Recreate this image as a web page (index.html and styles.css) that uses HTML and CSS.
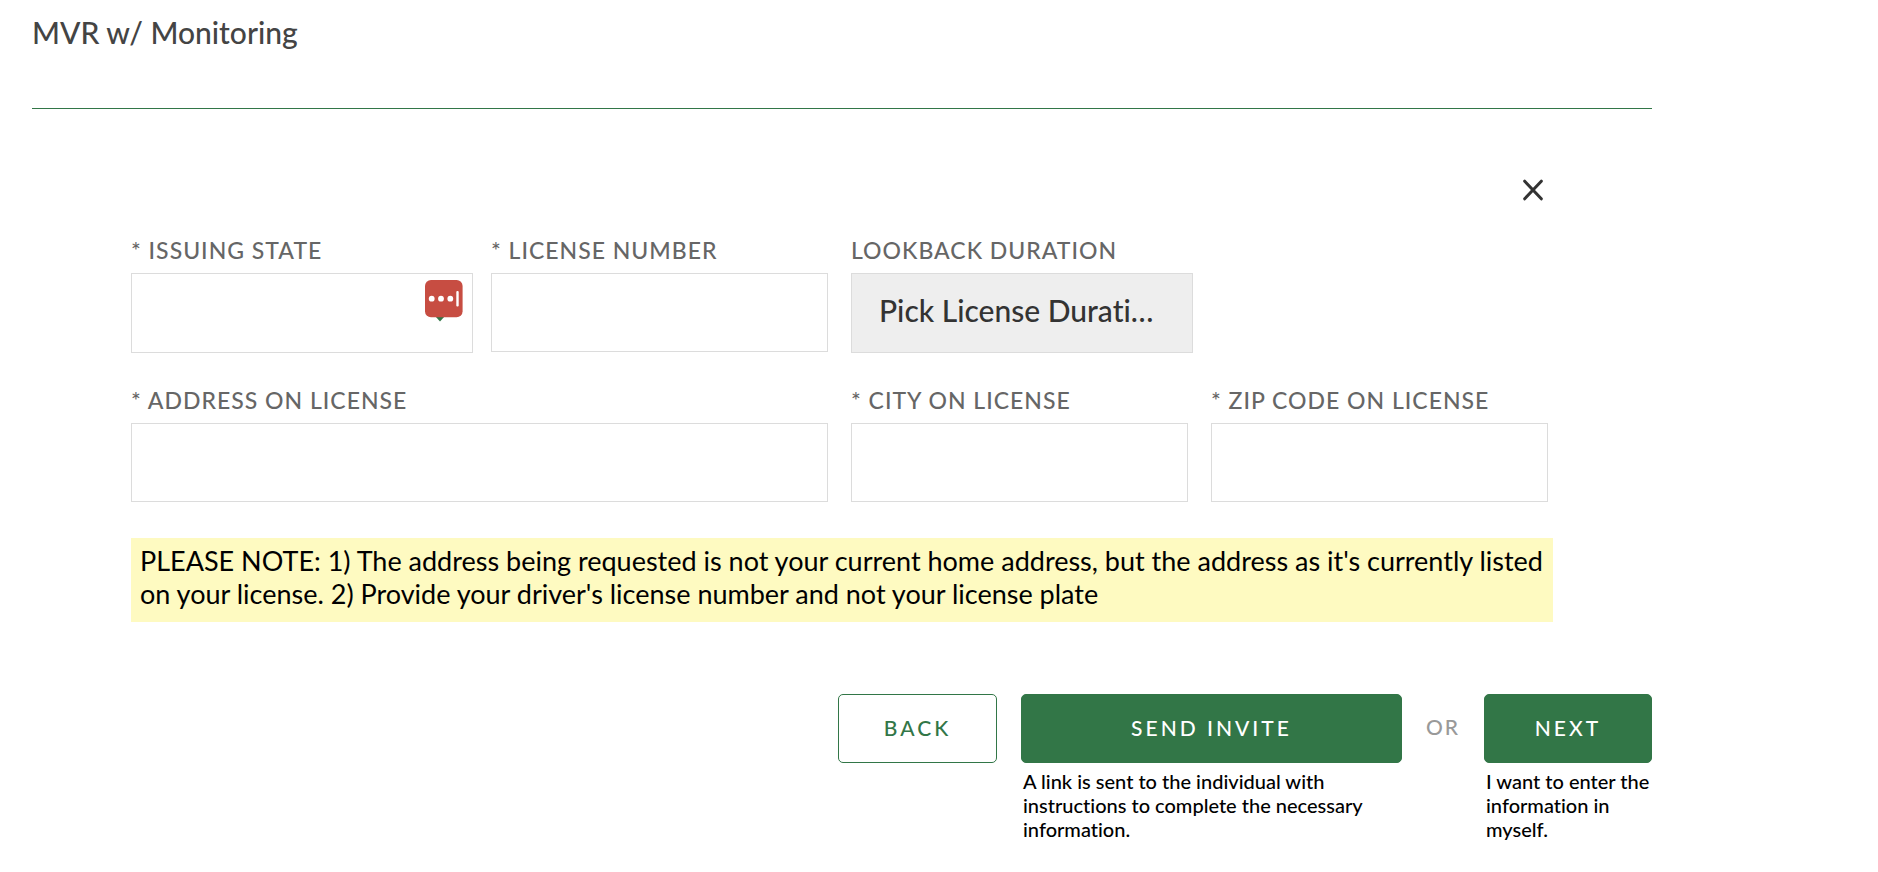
FILE: index.html
```html
<!DOCTYPE html>
<html lang="en">
<head>
    <meta charset="UTF-8">
    <meta name="viewport" content="width=device-width, initial-scale=1.0">
    <title>MVR w/ Monitoring</title>
    <link rel="stylesheet" href="styles.css">
</head>
<body>

    <main class="page">
        <h1 class="page-title">MVR w/ Monitoring</h1>

        <form class="license-form">
            <div class="form-top">
                <button type="button" class="close-button" aria-label="Close">
                    <svg width="20" height="22" viewBox="0 0 20 22" fill="none" stroke="#333333" stroke-width="3" stroke-linecap="round">
                        <path d="M1.7 2.2L18.3 19.8M18.3 2.2L1.7 19.8"/>
                    </svg>
                </button>
            </div>

            <div class="fields">
                <div class="field">
                    <label for="issuingState">* ISSUING STATE</label>
                    <div class="select-wrap">
                        <select id="issuingState">
                            <option value=""></option>
                        </select>
                        <svg class="fill-badge" width="38" height="42" viewBox="0 0 38 42">
                            <path d="M10 36h10l-5 5.5z" fill="#327647"/>
                            <rect x="0" y="0" width="37.6" height="37.3" rx="6" fill="#c74d42"/>
                            <circle cx="6.7" cy="18.7" r="2.9" fill="#ffffff"/>
                            <circle cx="16" cy="18.7" r="2.9" fill="#ffffff"/>
                            <circle cx="25.3" cy="18.7" r="2.9" fill="#ffffff"/>
                            <rect x="31.3" y="11" width="2.4" height="15.4" rx="1" fill="#ffffff"/>
                        </svg>
                    </div>
                </div>
                <div class="field">
                    <label for="licenseNumber">* LICENSE NUMBER</label>
                    <input type="text" id="licenseNumber">
                </div>
                <div class="field">
                    <label for="lookback">LOOKBACK DURATION</label>
                    <div class="select-wrap">
                        <select id="lookback" class="filled">
                            <option value="">Pick License Durati…</option>
                        </select>
                    </div>
                </div>
                <div class="field address">
                    <label for="address">* ADDRESS ON LICENSE</label>
                    <input type="text" id="address">
                </div>
                <div class="field">
                    <label for="city">* CITY ON LICENSE</label>
                    <input type="text" id="city">
                </div>
                <div class="field">
                    <label for="zip">* ZIP CODE ON LICENSE</label>
                    <input type="text" id="zip">
                </div>
            </div>

            <p class="note">PLEASE NOTE: 1) The address being requested is not your current home address, but the address as it's currently listed on your license. 2) Provide your driver's license number and not your license plate</p>
        </form>

        <div class="actions">
            <button type="button" class="btn btn-outline">BACK</button>
            <div class="action send">
                <button type="button" class="btn">SEND INVITE</button>
                <p class="hint">A link is sent to the individual with instructions to complete the necessary information.</p>
            </div>
            <span class="or">OR</span>
            <div class="action next">
                <button type="button" class="btn">NEXT</button>
                <p class="hint">I want to enter the information in myself.</p>
            </div>
        </div>
    </main>

</body>
</html>
```
FILE: styles.css
```css
* {
    box-sizing: border-box;
}

body {
    margin: 0;
    background-color: #ffffff;
    color: #000000;
    font-family: Lato, "Open Sans", sans-serif;
    font-weight: 500;
    font-variant-ligatures: none;
}

.page {
    padding: 0 226px 0 32px;
}

.page-title {
    margin: 0;
    height: 109px;
    padding-top: 13px;
    border-bottom: 1px solid #327647; /* Green rule */
    font-size: 30px;
    line-height: 38px;
    font-weight: 500;
    color: #444444;
}

.license-form {
    padding: 70px 99px 0;
}

.form-top {
    display: flex;
    justify-content: flex-end;
    padding-right: 10px;
}

.close-button {
    display: flex;
    padding: 0;
    border: none;
    background: none;
    cursor: pointer;
}

.fields {
    display: grid;
    grid-template-columns: repeat(4, 1fr);
    gap: 32px 23px;
    margin-top: 36px;
    padding-right: 5px;
}

.field {
    height: 118px;
}

/* Second row starts with the address */
.address {
    grid-column: 1 / span 2;
}

label {
    display: block;
    height: 36px;
    font-size: 23px;
    line-height: 27px;
    letter-spacing: 1px;
    white-space: nowrap;
    color: #666666;
}

input, select {
    display: block;
    width: 100%;
    height: 79px;
    padding: 0 27px;
    border: 1px solid #dcdcdc; /* Light gray field border */
    border-radius: 0;
    background-color: #ffffff;
    font-family: inherit;
    font-size: 30px;
    font-weight: inherit;
    font-variant-ligatures: none;
    color: #333333;
}

.select-wrap {
    position: relative;
    margin-right: -5px;
}

select {
    height: 80px;
    padding-bottom: 6px;
    appearance: none;
}

.filled {
    background-color: #eeeeee;
}

.fill-badge {
    position: absolute;
    top: 7px;
    right: 10px;
}

.note {
    margin: 33px 0 0;
    padding: 6px 9px 12px;
    background-color: #fefac1; /* Pale yellow highlight */
    font-size: 27px;
    line-height: 33px;
    font-weight: 400;
}

.actions {
    display: flex;
    justify-content: flex-end;
    align-items: flex-start;
    margin-top: 72px;
}

.btn {
    display: block;
    width: 100%;
    height: 69px;
    padding: 0 0 3px;
    border: 1px solid #327647;
    border-radius: 5px;
    background-color: #327647;
    color: #ffffff;
    font-family: inherit;
    font-size: 21px;
    font-weight: inherit;
    letter-spacing: 3px;
    cursor: pointer;
}

.btn-outline {
    width: 159px;
    background-color: #ffffff;
    color: #327647;
}

.send {
    width: 381px;
    margin-left: 24px;
}

.next {
    width: 168px;
}

.or {
    width: 82px;
    text-align: center;
    font-size: 21px;
    line-height: 66px;
    letter-spacing: 2px;
    color: #999999;
}

.hint {
    margin: 6px 0 0;
    padding-left: 2px;
    font-size: 20px;
    line-height: 24px;
}
```
